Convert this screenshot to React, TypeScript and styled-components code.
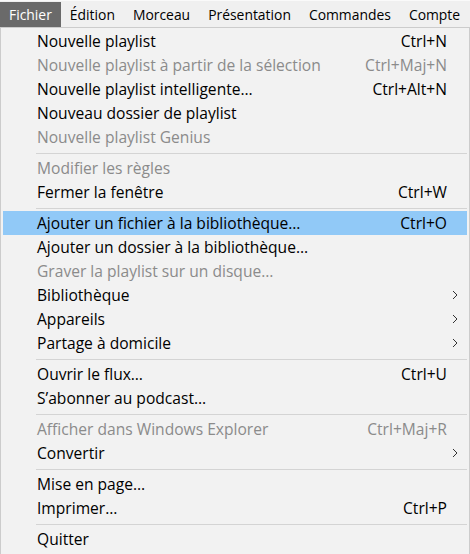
import React from "react";
import styled, { createGlobalStyle } from "styled-components";

const Global = createGlobalStyle`
  html, body { margin: 0; padding: 0; background: #f0f0f0; }
  body { font-family: "Open Sans", "Noto Sans", sans-serif; }
`;

const Page = styled.div`
  width: 470px;
  height: 554px;
  display: flex;
  flex-direction: column;
  background: #f0f0f0;
  overflow: hidden;
`;

const MenuBar = styled.div`
  height: 27px;
  display: flex;
  align-items: stretch;
  padding-top: 1px;
  box-sizing: border-box;
  background: #f0f0f0;
  border-top: 1px solid #fafafa;
`;

const BarItem = styled.div<{ $active?: boolean }>`
  padding: 0 9px;
  display: flex;
  align-items: center;
  font-size: 13.9px;
  color: ${(p) => (p.$active ? "#ffffff" : "#000000")};
  background: ${(p) => (p.$active ? "#6a6a6a" : "transparent")};
  white-space: nowrap;
`;

const Menu = styled.div`
  flex: 1;
  border: 1px solid #cccccc;
  border-bottom: none;
  background: #f2f2f2;
  padding: 1px 2px 0 2px;
  display: flex;
  flex-direction: column;
`;

const Row = styled.div<{ $hover?: boolean; $disabled?: boolean }>`
  height: 24px;
  display: grid;
  grid-template-columns: 1fr auto 20px;
  align-items: center;
  padding-left: 34px;
  font-size: 15.6px;
  color: ${(p) => (p.$disabled ? "#8b8b8b" : "#000000")};
  background: ${(p) => (p.$hover ? "#91c9f7" : "transparent")};
  white-space: nowrap;
`;

const Label = styled.span``;
const Shortcut = styled.span``;

const ArrowCell = styled.span`
  display: flex;
  align-items: center;
  padding-left: 5px;
`;

const Separator = styled.div`
  height: 7px;
  display: flex;
  align-items: center;
  padding-left: 33px;
  &::after {
    content: "";
    flex: 1;
    height: 1px;
    background: #d4d4d4;
    margin-top: 1px;
  }
`;

type Item =
  | { sep: true }
  | { label: string; shortcut?: string; disabled?: boolean; sub?: boolean; hover?: boolean; sep?: false };

const items: Item[] = [
  { label: "Nouvelle playlist", shortcut: "Ctrl+N" },
  { label: "Nouvelle playlist à partir de la sélection", shortcut: "Ctrl+Maj+N", disabled: true },
  { label: "Nouvelle playlist intelligente…", shortcut: "Ctrl+Alt+N" },
  { label: "Nouveau dossier de playlist" },
  { label: "Nouvelle playlist Genius", disabled: true },
  { sep: true },
  { label: "Modifier les règles", disabled: true },
  { label: "Fermer la fenêtre", shortcut: "Ctrl+W" },
  { sep: true },
  { label: "Ajouter un fichier à la bibliothèque…", shortcut: "Ctrl+O", hover: true },
  { label: "Ajouter un dossier à la bibliothèque…" },
  { label: "Graver la playlist sur un disque…", disabled: true },
  { label: "Bibliothèque", sub: true },
  { label: "Appareils", sub: true },
  { label: "Partage à domicile", sub: true },
  { sep: true },
  { label: "Ouvrir le flux…", shortcut: "Ctrl+U" },
  { label: "S’abonner au podcast…" },
  { sep: true },
  { label: "Afficher dans Windows Explorer", shortcut: "Ctrl+Maj+R", disabled: true },
  { label: "Convertir", sub: true },
  { sep: true },
  { label: "Mise en page…" },
  { label: "Imprimer…", shortcut: "Ctrl+P" },
  { sep: true },
  { label: "Quitter" },
];

const Chevron = () => (
  <svg width="6" height="10" viewBox="0 0 6 10">
    <path d="M1 1 L5 5 L1 9" fill="none" stroke="#333" strokeWidth="1" />
  </svg>
);

export default function App() {
  return (
    <Page>
      <Global />
      <MenuBar>
        <BarItem $active>Fichier</BarItem>
        <BarItem>Édition</BarItem>
        <BarItem>Morceau</BarItem>
        <BarItem>Présentation</BarItem>
        <BarItem>Commandes</BarItem>
        <BarItem>Compte</BarItem>
      </MenuBar>
      <Menu>
        {items.map((it, i) =>
          it.sep ? (
            <Separator key={i} />
          ) : (
            <Row key={i} $hover={it.hover} $disabled={it.disabled}>
              <Label>{it.label}</Label>
              <Shortcut>{it.shortcut ?? ""}</Shortcut>
              <ArrowCell>{it.sub ? <Chevron /> : null}</ArrowCell>
            </Row>
          )
        )}
      </Menu>
    </Page>
  );
}
